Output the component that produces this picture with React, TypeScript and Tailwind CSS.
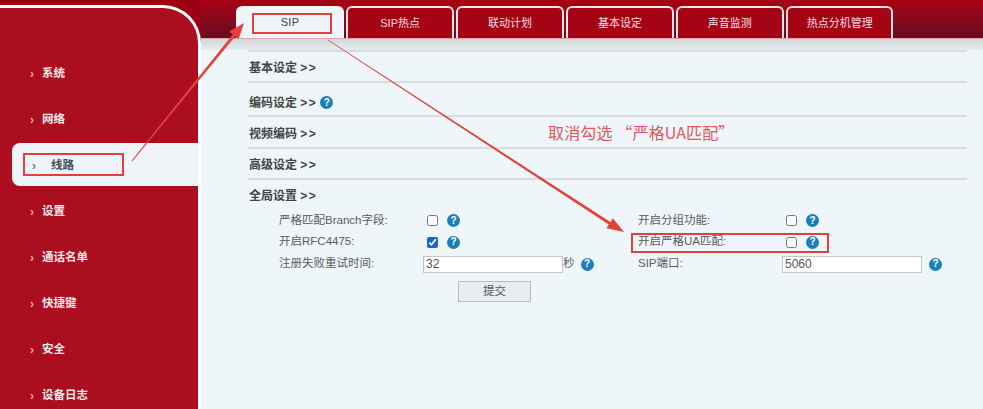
const navItems = ['系统', '网络', '线路', '设置', '通话名单', '快捷键', '安全', '设备日志']
const tabs = ['SIP', 'SIP热点', '联动计划', '基本设定', '声音监测', '热点分机管理']

const sections = [
    { title: '基本设定', box: 'h-[31px] pt-[2px]', help: false },
    { title: '编码设定', box: 'h-[34px] pt-[7px]', help: true },
    { title: '视频编码', box: 'h-[32px] pt-[3px]', help: false },
    { title: '高级设定', box: 'h-[31px] pt-[3px]', help: false },
]

function Help() {
    return (
        <span className="flex h-[13px] w-[13px] shrink-0 items-center justify-center rounded-full bg-[#1b7fb8] text-[10px] leading-none font-bold text-white">
            ?
        </span>
    )
}

function Check({ on }: { on?: boolean }) {
    return (
        <input
            type="checkbox"
            defaultChecked={on}
            className="ml-[4px] mr-[9px] h-[11px] w-[11px] accent-[#1a66d0]"
        />
    )
}

function TextBox({ value }: { value: string }) {
    return (
        <input
            defaultValue={value}
            className="h-[17px] w-[140px] border border-[#c4c8cc] bg-white px-[2px] text-[12px] text-[#555] outline-none"
        />
    )
}

function Row({ label, children }: { label: string; children: React.ReactNode }) {
    return (
        <div className="flex items-center">
            <span className="w-[144px] shrink-0 text-[11.5px] text-[#5c5c5c]">{label}</span>
            {children}
        </div>
    )
}

function Heading({ title, help }: { title: string; help?: boolean }) {
    return (
        <div className="flex items-center gap-[3px] pl-[1px] text-[12px] font-bold text-[#444]">
            <span>
                {title} <span className="tracking-[1.5px]">&gt;&gt;</span>
            </span>
            {help && <Help />}
        </div>
    )
}

export default function App() {
    return (
        <div
            className="relative flex h-[409px] w-[983px] overflow-hidden bg-[#eef6f9]"
            style={{ fontFamily: '"Liberation Sans", "Noto Sans CJK SC", sans-serif' }}
        >
            {/* Sidebar */}
            <aside className="w-[201px] shrink-0 bg-[#9d0013] pt-[5px]">
                <div className="h-full rounded-tr-[38px] border-t-[3px] border-r-[3px] border-white bg-[#ab0e1e] pt-[43px] pl-[12px]">
                    {navItems.map((item) =>
                        item === '线路' ? (
                            <div
                                key={item}
                                className="mb-[3px] flex h-[43px] items-center rounded-l-lg bg-[#eef4f8] pt-[2px] pl-[20px] text-[11.5px] font-bold text-[#3f4b52]"
                            >
                                <span className="mr-[14px] w-[5px] text-[12px] font-bold text-[#777]">›</span>
                                {item}
                            </div>
                        ) : (
                            <div key={item} className="flex h-[46px] items-center pl-[18px] text-[11.5px] font-bold text-[#f6e6e8]">
                                <span className="mr-[7px] w-[5px] text-[12px] font-bold text-[#f7a9ae]">›</span>
                                {item}
                            </div>
                        )
                    )}
                </div>
            </aside>

            {/* Main */}
            <main className="flex-1">
                <div className="flex h-[39px] items-end gap-[2.4px] border-b border-[#dca7ae] bg-gradient-to-b from-[#a80012] to-[#680a20] pl-[35px]">
                    {tabs.map((tab, i) => (
                        <div
                            key={tab}
                            className={
                                i === 0
                                    ? 'flex h-[32px] w-[108px] items-center justify-center rounded-t-md bg-[#eef4f8] text-[11px] tracking-wide text-[#444]'
                                    : 'flex h-[32px] w-[107.5px] items-center justify-center rounded-t-md border-x-2 border-t-2 border-[#f3e4e4] bg-[#a50414] text-[11px] text-[#f5dfe0]'
                            }
                        >
                            {tab}
                        </div>
                    ))}
                </div>
                <div className="h-[11px] bg-gradient-to-b from-[#d2d8d9] to-[#e6edef]" />

                <div className="ml-[47px] mr-[16px]">
                    {sections.map((s) => (
                        <div key={s.title} className={`flex items-center border-t-2 border-[#d6dcdf] ${s.box}`}>
                            <Heading title={s.title} help={s.help} />
                        </div>
                    ))}

                    <div className="border-t-2 border-[#d6dcdf] pt-[7px]">
                        <Heading title="全局设置" />
                        <div className="mt-[5px] ml-[31px] grid grid-cols-[359px_1fr] grid-rows-[21px_22px_22px]">
                            <Row label="严格匹配Branch字段:">
                                <Check />
                                <Help />
                            </Row>
                            <Row label="开启分组功能:">
                                <Check />
                                <Help />
                            </Row>
                            <Row label="开启RFC4475:">
                                <Check on />
                                <Help />
                            </Row>
                            <Row label="开启严格UA匹配:">
                                <Check />
                                <Help />
                            </Row>
                            <Row label="注册失败重试时间:">
                                <TextBox value="32" />
                                <span className="mr-[6px] text-[11.5px] text-[#5c5c5c]">秒</span>
                                <Help />
                            </Row>
                            <Row label="SIP端口:">
                                <TextBox value="5060" />
                                <span className="ml-[7px]">
                                    <Help />
                                </span>
                            </Row>
                        </div>
                        <button className="mt-[6px] ml-[210px] h-[21px] w-[73px] border border-[#b8bcbf] bg-[#e9edef] text-[11.5px] text-[#555]">
                            提交
                        </button>
                    </div>
                </div>
            </main>

            {/* Annotations over the screenshot */}
            <span
                className="absolute top-[123px] left-[548px] text-[16px] leading-[18px] tracking-[0.15px] text-[#e2555a]"
                style={{ fontFamily: '"Noto Sans CJK SC", sans-serif' }}
            >
                取消勾选 “严格UA匹配”
            </span>
            <div className="absolute top-[13px] left-[252px] h-[21px] w-[80px] border-2 border-[#e2413b]" />
            <div className="absolute top-[153px] left-[23px] h-[23px] w-[101px] border-2 border-[#e2413b]" />
            <div className="absolute top-[233px] left-[631px] h-[20px] w-[198px] border-2 border-[#e2413b]" />
            <svg className="pointer-events-none absolute inset-0" width="983" height="409" viewBox="0 0 983 409">
                <polygon
                    fill="#e5413b"
                    points="131.6,160.7 232.7,34.5 229.2,31.6 244,23 238.6,39.2 235.1,36.4 132.4,161.3"
                />
                <polygon
                    fill="#e5413b"
                    points="328.2,39.8 610.4,222 612.9,218.3 624,232 606.4,228.3 608.8,224.6 327.8,40.2"
                />
            </svg>
        </div>
    )
}
